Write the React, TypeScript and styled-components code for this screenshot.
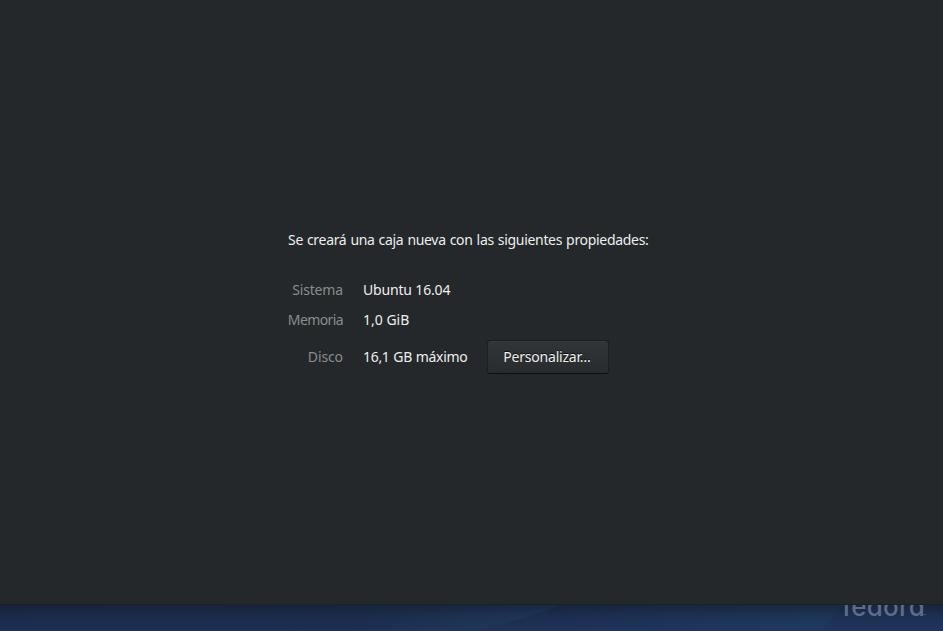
import React from "react";
import styled, { createGlobalStyle } from "styled-components";

const GlobalStyle = createGlobalStyle`
  * { box-sizing: border-box; }
  body { margin: 0; background: #1e3157; }
`;

const Desktop = styled.div`
  display: flex;
  flex-direction: column;
  width: 943px;
  height: 631px;
  overflow: hidden;
  font-family: "Noto Sans", "Open Sans", sans-serif;
  font-size: 14px;
  line-height: 20px;
  color: #eeeeec;
`;

const Window = styled.main`
  flex: 0 0 605px;
  padding: 230px 0 0 288px;
  background: #24282a;
  border-bottom: 1px solid #1d2121;
`;

const Line = styled.span<{ $spacing?: number; $words?: number }>`
  display: block;
  white-space: nowrap;
  letter-spacing: ${({ $spacing = 0 }) => $spacing}px;
  word-spacing: ${({ $words = 0 }) => $words}px;
`;

const Properties = styled.dl`
  display: grid;
  grid-template-columns: 55px max-content;
  grid-template-rows: 20px 20px 34px;
  gap: 10px 20px;
  align-items: center;
  margin: 30px 0 0;
`;

const Label = styled.dt`
  display: flex;
  justify-content: flex-end;
  color: #8a8c8d;
`;

const Value = styled.dd`
  display: flex;
  align-items: center;
  margin: 0;
`;

const DiskSize = styled.div`
  width: 124px;
`;

const Button = styled.button`
  display: flex;
  align-items: center;
  justify-content: center;
  width: 122px;
  height: 34px;
  padding: 0 2px 0 0;
  border: 1px solid #1b1f20;
  border-bottom-color: #0c0e0e;
  border-radius: 3px;
  background: linear-gradient(#303537, #282c2e);
  box-shadow: inset 0 1px #34393b;
  color: #eeeeec;
  font: inherit;
  text-shadow: 0 -1px rgba(0, 0, 0, 0.7);
`;

const Wallpaper = styled.div`
  position: relative;
  flex: 1;
  overflow: hidden;
  background: #1e3158;
`;

const Waves = styled.svg`
  display: block;
`;

const Brand = styled.span`
  position: absolute;
  left: 842px;
  top: -14px;
  font: 500 26px/32px Inter, sans-serif;
  font-feature-settings: "cv11";
  letter-spacing: 0.2px;
  color: #5c6c89;
`;

const BrandMark = styled.span`
  position: absolute;
  left: 924px;
  top: 9px;
  width: 2px;
  height: 1px;
  background: #46587a;
`;

export default function App() {
  return (
    <>
      <GlobalStyle />
      <Desktop>
        <Window>
          <Line $spacing={-0.31} $words={0.65}>Se creará una caja nueva con las siguientes propiedades:</Line>
          <Properties>
            <Label><Line $spacing={-0.15}>Sistema</Line></Label>
            <Value><Line $spacing={-0.17}>Ubuntu 16.04</Line></Value>
            <Label><Line $spacing={-0.6}>Memoria</Line></Label>
            <Value><Line>1,0 GiB</Line></Value>
            <Label><Line $spacing={-0.1}>Disco</Line></Label>
            <Value>
              <DiskSize><Line $spacing={-0.32} $words={0.5}>16,1 GB máximo</Line></DiskSize>
              <Button type="button"><Line $spacing={-0.2}>Personalizar…</Line></Button>
            </Value>
          </Properties>
        </Window>
        <Wallpaper>
          <Waves width="943" height="26" viewBox="0 0 943 26">
            <defs>
              <linearGradient id="base">
                <stop offset="0" stopColor="#1e2e53" />
                <stop offset="0.38" stopColor="#1e2f55" />
                <stop offset="0.6" stopColor="#1f3258" />
                <stop offset="0.86" stopColor="#203a63" />
                <stop offset="1" stopColor="#20365e" />
              </linearGradient>
              <linearGradient id="sheen">
                <stop offset="0" stopColor="#1e3055" />
                <stop offset="1" stopColor="#223b60" />
              </linearGradient>
              <linearGradient id="shade" x2="0" y2="1">
                <stop offset="0" stopColor="#0d181e" stopOpacity="0.5" />
                <stop offset="0.45" stopColor="#0d181e" stopOpacity="0.16" />
                <stop offset="1" stopColor="#0d181e" stopOpacity="0" />
              </linearGradient>
            </defs>
            <path fill="url(#base)" d="M0 0H943V26H0Z" />
            <path fill="url(#sheen)" d="M370 0H560Q525 15 470 26H370Z" />
            <path fill="#21345c" d="M843 0H943V26H821Z" />
            <path fill="url(#shade)" d="M0 0H943V26H0Z" />
            <path fill="#26315a" d="M0 25H943V26H0Z" />
          </Waves>
          <Brand>fedora</Brand>
          <BrandMark />
        </Wallpaper>
      </Desktop>
    </>
  );
}
